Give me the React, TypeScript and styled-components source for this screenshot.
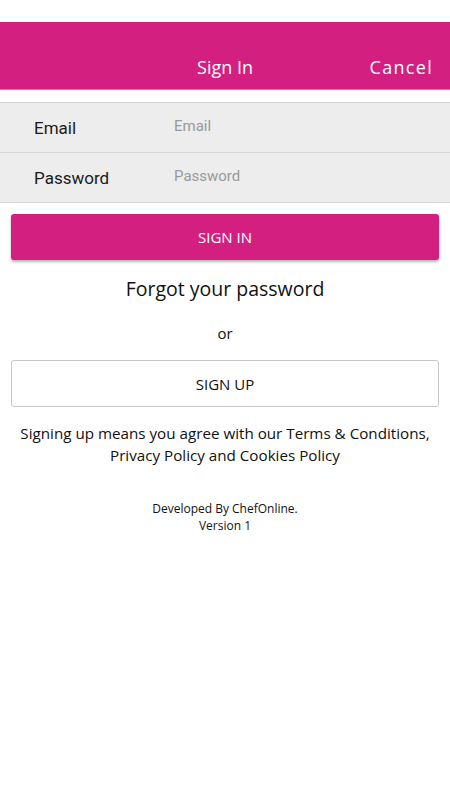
import React from "react";
import styled, { createGlobalStyle } from "styled-components";

const Global = createGlobalStyle`
  html, body { margin: 0; padding: 0; background: #fff; }
  body { font-family: "Open Sans", "Noto Sans", sans-serif; }
  * { box-sizing: border-box; }
`;

const Page = styled.div`
  width: 450px;
  min-height: 800px;
  padding-top: 22px;
  display: flex;
  flex-direction: column;
`;

const Header = styled.header`
  height: 68px;
  background: #d31f80;
  border-bottom: 1px solid #e070a8;
  display: grid;
  grid-template-columns: 1fr auto 1fr;
  align-items: end;
  padding: 0 18px 10px 18px;
`;

const Title = styled.div`
  grid-column: 2;
  color: #fff;
  font-size: 18px;
  line-height: 24px;
`;

const Cancel = styled.div`
  grid-column: 3;
  justify-self: end;
  color: #fff;
  font-size: 18px;
  letter-spacing: 1.3px;
  line-height: 24px;
  margin-right: -1px;
`;

const Form = styled.div`
  margin-top: 12px;
  background: #ededed;
  border-top: 1px solid #d6d6d6;
`;

const Row = styled.div`
  height: 50px;
  display: flex;
  align-items: center;
  border-bottom: 1px solid #d6d6d6;
  padding-left: 34px;
`;

const Label = styled.div`
  width: 140px;
  font-family: Roboto, "Noto Sans", sans-serif;
  font-size: 17px;
  color: #1a1a1a;
  padding-top: 1px;
`;

const Placeholder = styled.div`
  font-family: Roboto, "Noto Sans", sans-serif;
  font-size: 15px;
  color: #9a9a9a;
  margin-top: -4px;
`;

const Content = styled.div`
  padding: 11px 11px 0 11px;
  display: flex;
  flex-direction: column;
  align-items: center;
`;

const Button = styled.div<{ $primary?: boolean }>`
  width: 100%;
  height: ${(p) => (p.$primary ? "46px" : "47px")};
  border-radius: 3px;
  display: flex;
  align-items: center;
  justify-content: center;
  font-size: 15px;
  background: ${(p) => (p.$primary ? "#d31f80" : "#fff")};
  color: ${(p) => (p.$primary ? "#fff" : "#111")};
  border: ${(p) => (p.$primary ? "none" : "1px solid #c8c8c8")};
  box-shadow: ${(p) => (p.$primary ? "0 2px 3px rgba(0,0,0,0.3)" : "none")};
`;

const Forgot = styled.div`
  margin-top: 15px;
  font-size: 19.5px;
  color: #111;
  line-height: 28px;
`;

const Or = styled.div`
  margin-top: 20px;
  margin-bottom: 17px;
  font-size: 15px;
  color: #111;
  line-height: 20px;
`;

const Terms = styled.div`
  margin-top: 15px;
  font-size: 15.2px;
  line-height: 22px;
  color: #111;
  text-align: center;
`;

const Footer = styled.div`
  margin-top: 34px;
  font-size: 12px;
  line-height: 17px;
  color: #111;
  text-align: center;
`;

export default function App() {
  return (
    <>
      <Global />
      <Page>
        <Header>
          <Title>Sign In</Title>
          <Cancel>Cancel</Cancel>
        </Header>
        <Form>
          <Row>
            <Label>Email</Label>
            <Placeholder>Email</Placeholder>
          </Row>
          <Row>
            <Label>Password</Label>
            <Placeholder>Password</Placeholder>
          </Row>
        </Form>
        <Content>
          <Button $primary>SIGN IN</Button>
          <Forgot>Forgot your password</Forgot>
          <Or>or</Or>
          <Button>SIGN UP</Button>
          <Terms>
            Signing up means you agree with our Terms &amp; Conditions,
            <br />
            Privacy Policy and Cookies Policy
          </Terms>
          <Footer>
            Developed By ChefOnline.
            <br />
            Version 1
          </Footer>
        </Content>
      </Page>
    </>
  );
}
